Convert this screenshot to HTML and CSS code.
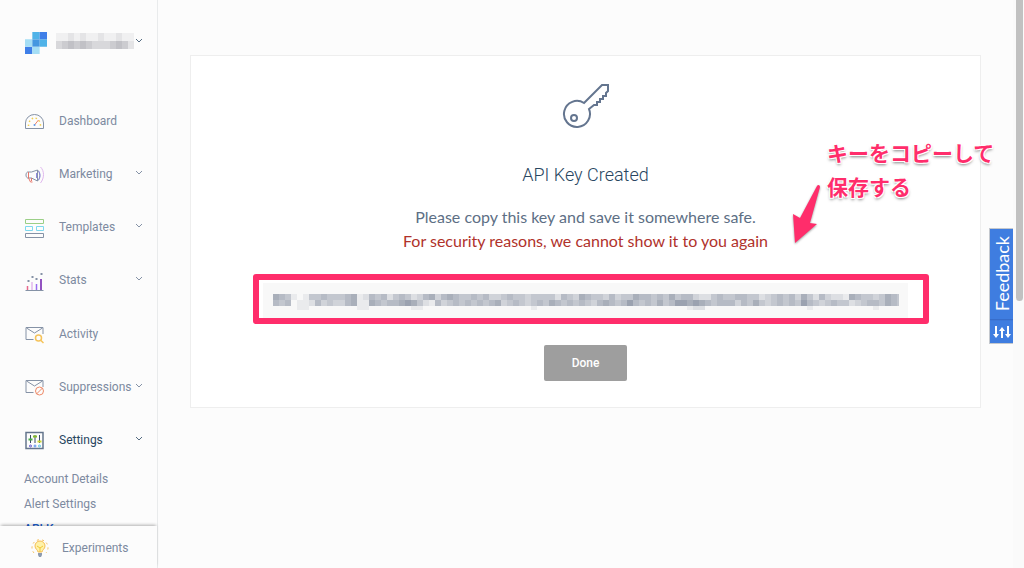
FILE: index.html
```html
<!DOCTYPE html>
<html lang="en">
<head>
    <meta charset="UTF-8">
    <meta name="viewport" content="width=device-width, initial-scale=1.0">
    <title>API Key Created</title>
    <link rel="stylesheet" href="styles.css">
</head>
<body>

    <aside class="sidebar">
        <button class="account" type="button" aria-label="Account menu">
            <svg class="logo" width="22" height="22" viewBox="0 0 21 21">
                <path fill="#50b3e8" d="M7 0h7v7H7zM14 7h7v7h-7z"/>
                <path fill="#3f7fe8" d="M14 0h7v7h-7zM0 14h7v7H0z"/>
                <path fill="#a5def5" d="M0 7h7v7H0zM7 14h7v7H7z"/>
                <path fill="#4597e0" d="M7 7h7v7H7z"/>
            </svg>
            <svg class="mosaic" data-rows="1121211211211,3454543334542" data-cell="6 8" data-color="#85858f" width="78" height="16"></svg>
            <svg class="caret" viewBox="0 0 8 6"><path d="M1 1l3 3 3-3"/></svg>
        </button>

        <nav>
            <ul class="menu">
                <li><a href="#">
                    <svg class="icon" viewBox="0 0 20 20">
                        <path stroke="#8592a6" d="M1 16.500V11a9 8.500 0 0 1 18 0v5.500z"/>
                        <path stroke="#f3cf50" stroke-width="1.500" stroke-dasharray="1.500 2.500" d="M4 14a6 8 0 0 1 12 0"/>
                        <path stroke="#ef8468" d="M10 13l4-5"/>
                        <circle cx="10" cy="13" r="1" fill="#5b9bed"/>
                    </svg>
                    <span>Dashboard</span>
                </a></li>
                <li><a href="#">
                    <svg class="icon" viewBox="0 0 20 20">
                        <path stroke="#8592a6" d="M3 7h4l6-2v11l-6-3H3c-2-1-2-5 0-6zM13 5c3 3 3 8 0 11"/>
                        <path stroke="#e7786c" d="M4 7v6l2 4h2M7 13v3"/>
                        <path stroke="#8f8be0" d="M12 8v5M14 6c2 2 2 7 0 9"/>
                        <path stroke="#e0b7ee" d="M16 2c4 4 4 11 0 16"/>
                    </svg>
                    <span>Marketing</span>
                    <svg class="caret" viewBox="0 0 8 6"><path d="M1 1l3 3 3-3"/></svg>
                </a></li>
                <li><a href="#">
                    <svg class="icon" viewBox="0 0 20 20">
                        <path stroke="#9bcf87" d="M1 1.500h18v4H1z"/>
                        <path stroke="#7ed8ee" d="M1 8.500h7v4H1zM12 8.500h7v4h-7z"/>
                        <path stroke="#8592a6" d="M1 15.500h18v4H1z"/>
                    </svg>
                    <span>Templates</span>
                    <svg class="caret" viewBox="0 0 8 6"><path d="M1 1l3 3 3-3"/></svg>
                </a></li>
                <li><a href="#">
                    <svg class="icon" viewBox="0 0 20 20">
                        <path stroke="#e8688d" stroke-width="1.500" d="M3 19v-4"/>
                        <path stroke="#e3b9ee" stroke-width="1.500" d="M7.500 19v-8"/>
                        <path stroke="#9a6cf0" stroke-width="1.500" d="M12 19v-6"/>
                        <path stroke="#9252c0" stroke-width="2" d="M16.500 19V8"/>
                        <path stroke="#8592a6" d="M1 19.500h18"/>
                        <path fill="#8592a6" d="M3 9h2v2H3zM7 5h2v2H7zM11 7h2v2h-2zM16 2h2v2h-2z"/>
                    </svg>
                    <span>Stats</span>
                    <svg class="caret" viewBox="0 0 8 6"><path d="M1 1l3 3 3-3"/></svg>
                </a></li>
                <li><a href="#">
                    <svg class="icon" viewBox="0 0 20 20">
                        <path stroke="#8592a6" d="M9 14.500H1.500v-12h17V9M2 3l8 5 8-5"/>
                        <circle cx="14" cy="13" r="3" stroke="#f5c35b" stroke-width="1.500"/>
                        <path stroke="#f5c35b" stroke-width="1.500" d="M16 15l3 3"/>
                    </svg>
                    <span>Activity</span>
                </a></li>
                <li><a href="#">
                    <svg class="icon" viewBox="0 0 20 20">
                        <path stroke="#8592a6" d="M9 14.500H1.500v-12h17V9M2 3l8 5 8-5"/>
                        <circle cx="15" cy="13" r="4" stroke="#ee8a68"/>
                        <path stroke="#ee8a68" d="M12 16l6-6"/>
                    </svg>
                    <span>Suppressions</span>
                    <svg class="caret" viewBox="0 0 8 6"><path d="M1 1l3 3 3-3"/></svg>
                </a></li>
                <li class="open"><a href="#">
                    <svg class="icon" viewBox="0 0 20 20">
                        <path stroke="#64758c" stroke-width="1.500" d="M1.500 1.500h17v16h-17z"/>
                        <path stroke="#3b4a66" d="M6 4v8M10.500 4v8M15 4v8"/>
                        <path stroke="#49ae45" stroke-width="2" d="M4 8.500h4"/>
                        <path stroke="#83bb24" stroke-width="2" d="M8.500 5.500h4"/>
                        <path stroke="#cbd72e" stroke-width="2" d="M13 10.500h4"/>
                        <circle cx="6" cy="15" r="1" stroke="#6054cc"/>
                        <circle cx="10.500" cy="15" r="1" stroke="#5792f0"/>
                        <circle cx="15" cy="15" r="1" stroke="#59c4df"/>
                    </svg>
                    <span>Settings</span>
                    <svg class="caret" viewBox="0 0 8 6"><path d="M1 1l3 3 3-3"/></svg>
                </a></li>
            </ul>
            <ul class="submenu">
                <li><a href="#">Account Details</a></li>
                <li><a href="#">Alert Settings</a></li>
                <li><a href="#" class="current">API Keys</a></li>
            </ul>
        </nav>

        <a class="experiments" href="#">
            <svg width="18" height="18" viewBox="0 0 18 18" fill="none">
                <path stroke="#f5bd55" stroke-dasharray="2 3" d="M3 14a8 8 0 1 1 12 0"/>
                <path fill="#fff2a8" stroke="#f5bd55" d="M7 13c0-2-3-3-3-6a5 5 0 0 1 10 0c0 3-3 4-3 6z"/>
                <path stroke="#f0c838" d="M6 7l3 2 3-2M9 9v4"/>
                <path fill="#8d9bb0" d="M7 14h4v2l-1 2H8l-1-2z"/>
            </svg>
            <span>Experiments</span>
        </a>
    </aside>

    <main>
        <section class="card">
            <svg class="key-icon" width="48" height="48" viewBox="0 0 48 48">
                <path d="M22 20L40 2h6v6l-2 2v3h-3v3h-3v3h-3v3h-3L27 26a13 13 0 1 1-5-6z"/>
                <circle cx="12" cy="35" r="3"/>
            </svg>
            <h1>API Key Created</h1>
            <p>Please copy this key and save it somewhere safe.</p>
            <p class="warning">For security reasons, we cannot show it to you again</p>

            <div class="key">
                <svg class="mosaic" data-rows="65410144544456125452454235635654454533454434444254365443534465545464553224544554423454536425322165443465453355543444,54501125343356116545567642153454545456345434546545454356545754546457767654555354643454547543454423455465444445355657,00001100000000110000000110000000000000000001000000000000000000000000012200000000000000000100000000001000000010000120" data-cell="6 6" data-color="#747e91" width="626" height="16"></svg>
            </div>

            <button class="done" type="button">Done</button>

            <div class="note">
                キーをコピーして<br>保存する
                <svg class="arrow" width="32" height="64" viewBox="0 0 32 64">
                    <path d="M25 2c1-2 3-1 3 1L18 39l7 1L3 59 1 30l7 4z"/>
                </svg>
            </div>
        </section>
    </main>

    <button class="feedback" type="button">
        <span>Feedback</span>
        <svg width="20" height="14" viewBox="0 0 20 14">
            <path d="M3 1h2v8h2l-3 4-3-4h2zM9 13h2V6h2l-3-4-3 4h2zM15 1h2v8h2l-3 4-3-4h2z"/>
        </svg>
    </button>

    <div class="scrollbar"><div class="thumb"></div></div>

    <script src="script.js"></script>
</body>
</html>
```
FILE: styles.css
```css
* {
    box-sizing: border-box;
}

body {
    margin: 0;
    display: flex;
    height: 100vh;
    overflow: hidden;
    background-color: #fcfcfc;
    color: #5d6f85;
    font-family: Roboto, "Liberation Sans", sans-serif;
}

ul {
    list-style: none;
    margin: 0;
    padding: 0;
}

a {
    color: inherit;
    text-decoration: none;
}

button {
    border: 0;
    font-family: inherit;
    cursor: pointer;
}

/* Sidebar */
.sidebar {
    width: 158px;
    flex: none;
    display: flex;
    flex-direction: column;
    border-right: 1px solid #e9ebec;
    color: #7d8aa0;
    font-size: 12px;
}

.account {
    flex: none;
    display: flex;
    align-items: flex-start;
    width: 100%;
    height: 94px;
    padding: 32px 14px 0 25px;
    background: none;
}

.account .mosaic {
    margin: 1px 0 0 9px;
}

.account .caret {
    margin: 6px 0 0 auto;
}

.caret {
    width: 8px;
    height: 6px;
    margin: 0 0 2px auto;
    flex: none;
    fill: none;
    stroke: #8592a6;
    stroke-width: 1;
}

.account .caret,
.open .caret {
    stroke: #546b81;
}

nav {
    flex: 1;
    min-height: 0;
    overflow: hidden;
}

.menu {
    display: grid;
    grid-auto-rows: 1fr;
    height: 373px;
}

.menu a {
    display: flex;
    align-items: center;
    height: 100%;
    padding: 0 14px 0 24px;
}

.icon {
    width: 21px;
    height: 20px;
    margin: 2px 14px 0 0;
    flex: none;
    fill: none;
}

.open {
    color: #294661;
}

.submenu li {
    line-height: 25px;
    padding-left: 24px;
}

.submenu .current {
    color: #1a5fd0;
    font-weight: 500;
}

.experiments {
    flex: none;
    display: flex;
    align-items: center;
    gap: 13px;
    height: 42px;
    padding: 2px 0 0 31px;
    box-shadow: 0 -2px 3px -1px rgba(0, 0, 0, 0.3);
    z-index: 1;
}

/* Content */
main {
    flex: 1;
    min-width: 0;
    padding: 55px 32px;
}

.card {
    position: relative;
    display: flex;
    flex-direction: column;
    align-items: center;
    padding: 27px 62px 26px;
    background-color: #fff;
    border: 1px solid #eee;
}

.key-icon {
    fill: none;
    stroke: #64758f;
    stroke-width: 2;
}

h1 {
    margin: 31px 0 17px;
    font-size: 18px;
    font-weight: 300;
    line-height: 26px;
    color: #294661;
}

p {
    margin: 0;
    font-family: Lato, sans-serif;
    font-size: 16px;
    line-height: 24px;
}

.warning {
    color: #b0322b;
}

/* The frame reaches a little past the right end of the key */
.key {
    align-self: flex-start;
    display: flex;
    align-items: center;
    width: calc(100% + 11px);
    height: 50px;
    margin: 21px 0;
    padding: 6px 0 0 14px;
    border: 6px solid #ff2d6b;
    border-radius: 3px;
    background: linear-gradient(#f8f8f8, #f8f8f8) 4px 3px / calc(100% - 19px) 100% no-repeat;
}

.done {
    width: 83px;
    height: 36px;
    border-radius: 2px;
    background-color: #9e9e9e;
    color: #fff;
    font-size: 12px;
    font-weight: 500;
}

/* Pink note over the card */
.note {
    position: absolute;
    top: 79px;
    right: -15px;
    width: 168px;
    white-space: nowrap;
    color: #ff2d6b;
    font-family: "Noto Sans CJK JP", sans-serif;
    font-size: 21px;
    font-weight: 700;
    line-height: 34px;
    text-shadow: 1px 1px 0 #fff, -1px -1px 0 #fff, 1px -1px 0 #fff, -1px 1px 0 #fff, 0 2px 3px rgba(0, 0, 0, 0.5);
}

.arrow {
    position: absolute;
    top: 49px;
    left: -35px;
    fill: #ff2d6b;
    filter: drop-shadow(0 1px 1px rgba(0, 0, 0, 0.4));
}

.feedback {
    position: fixed;
    top: 228px;
    right: 11px;
    display: flex;
    flex-direction: column;
    align-items: center;
    justify-content: space-between;
    width: 24px;
    height: 116px;
    padding: 7px 0 4px;
    border: 1px solid #c4c8ce;
    border-right: 0;
    background: linear-gradient(#3f7de0 90px, #3468c4 90px, #3f7de0 92px);
    color: #fff;
}

.feedback span {
    writing-mode: vertical-rl;
    transform: rotate(180deg);
    font-family: Lato, sans-serif;
    font-size: 18px;
    font-weight: 400;
    line-height: 22px;
}

.feedback svg {
    fill: #fff;
}

.scrollbar {
    width: 11px;
    flex: none;
    background-color: #fafafa;
}

.thumb {
    width: 7px;
    height: 53vh;
    margin-left: 3px;
    border-radius: 0 0 4px 4px;
    background-color: #c1c1c1;
}
```
FILE: script.js
```js
// Draw masked values as a mosaic, one digit per cell (0 = empty, 9 = darkest)
document.querySelectorAll('.mosaic').forEach(svg => {
    const [width, height] = svg.dataset.cell.split(' ').map(Number);

    svg.dataset.rows.split(',').forEach((row, y) => {
        [...row].forEach((shade, x) => {
            const rect = document.createElementNS('http://www.w3.org/2000/svg', 'rect');
            rect.setAttribute('x', x * width);
            rect.setAttribute('y', y * height);
            rect.setAttribute('width', width);
            rect.setAttribute('height', height);
            rect.setAttribute('fill', svg.dataset.color);
            rect.setAttribute('fill-opacity', shade * 0.1);
            svg.appendChild(rect);
        });
    });
});
```
